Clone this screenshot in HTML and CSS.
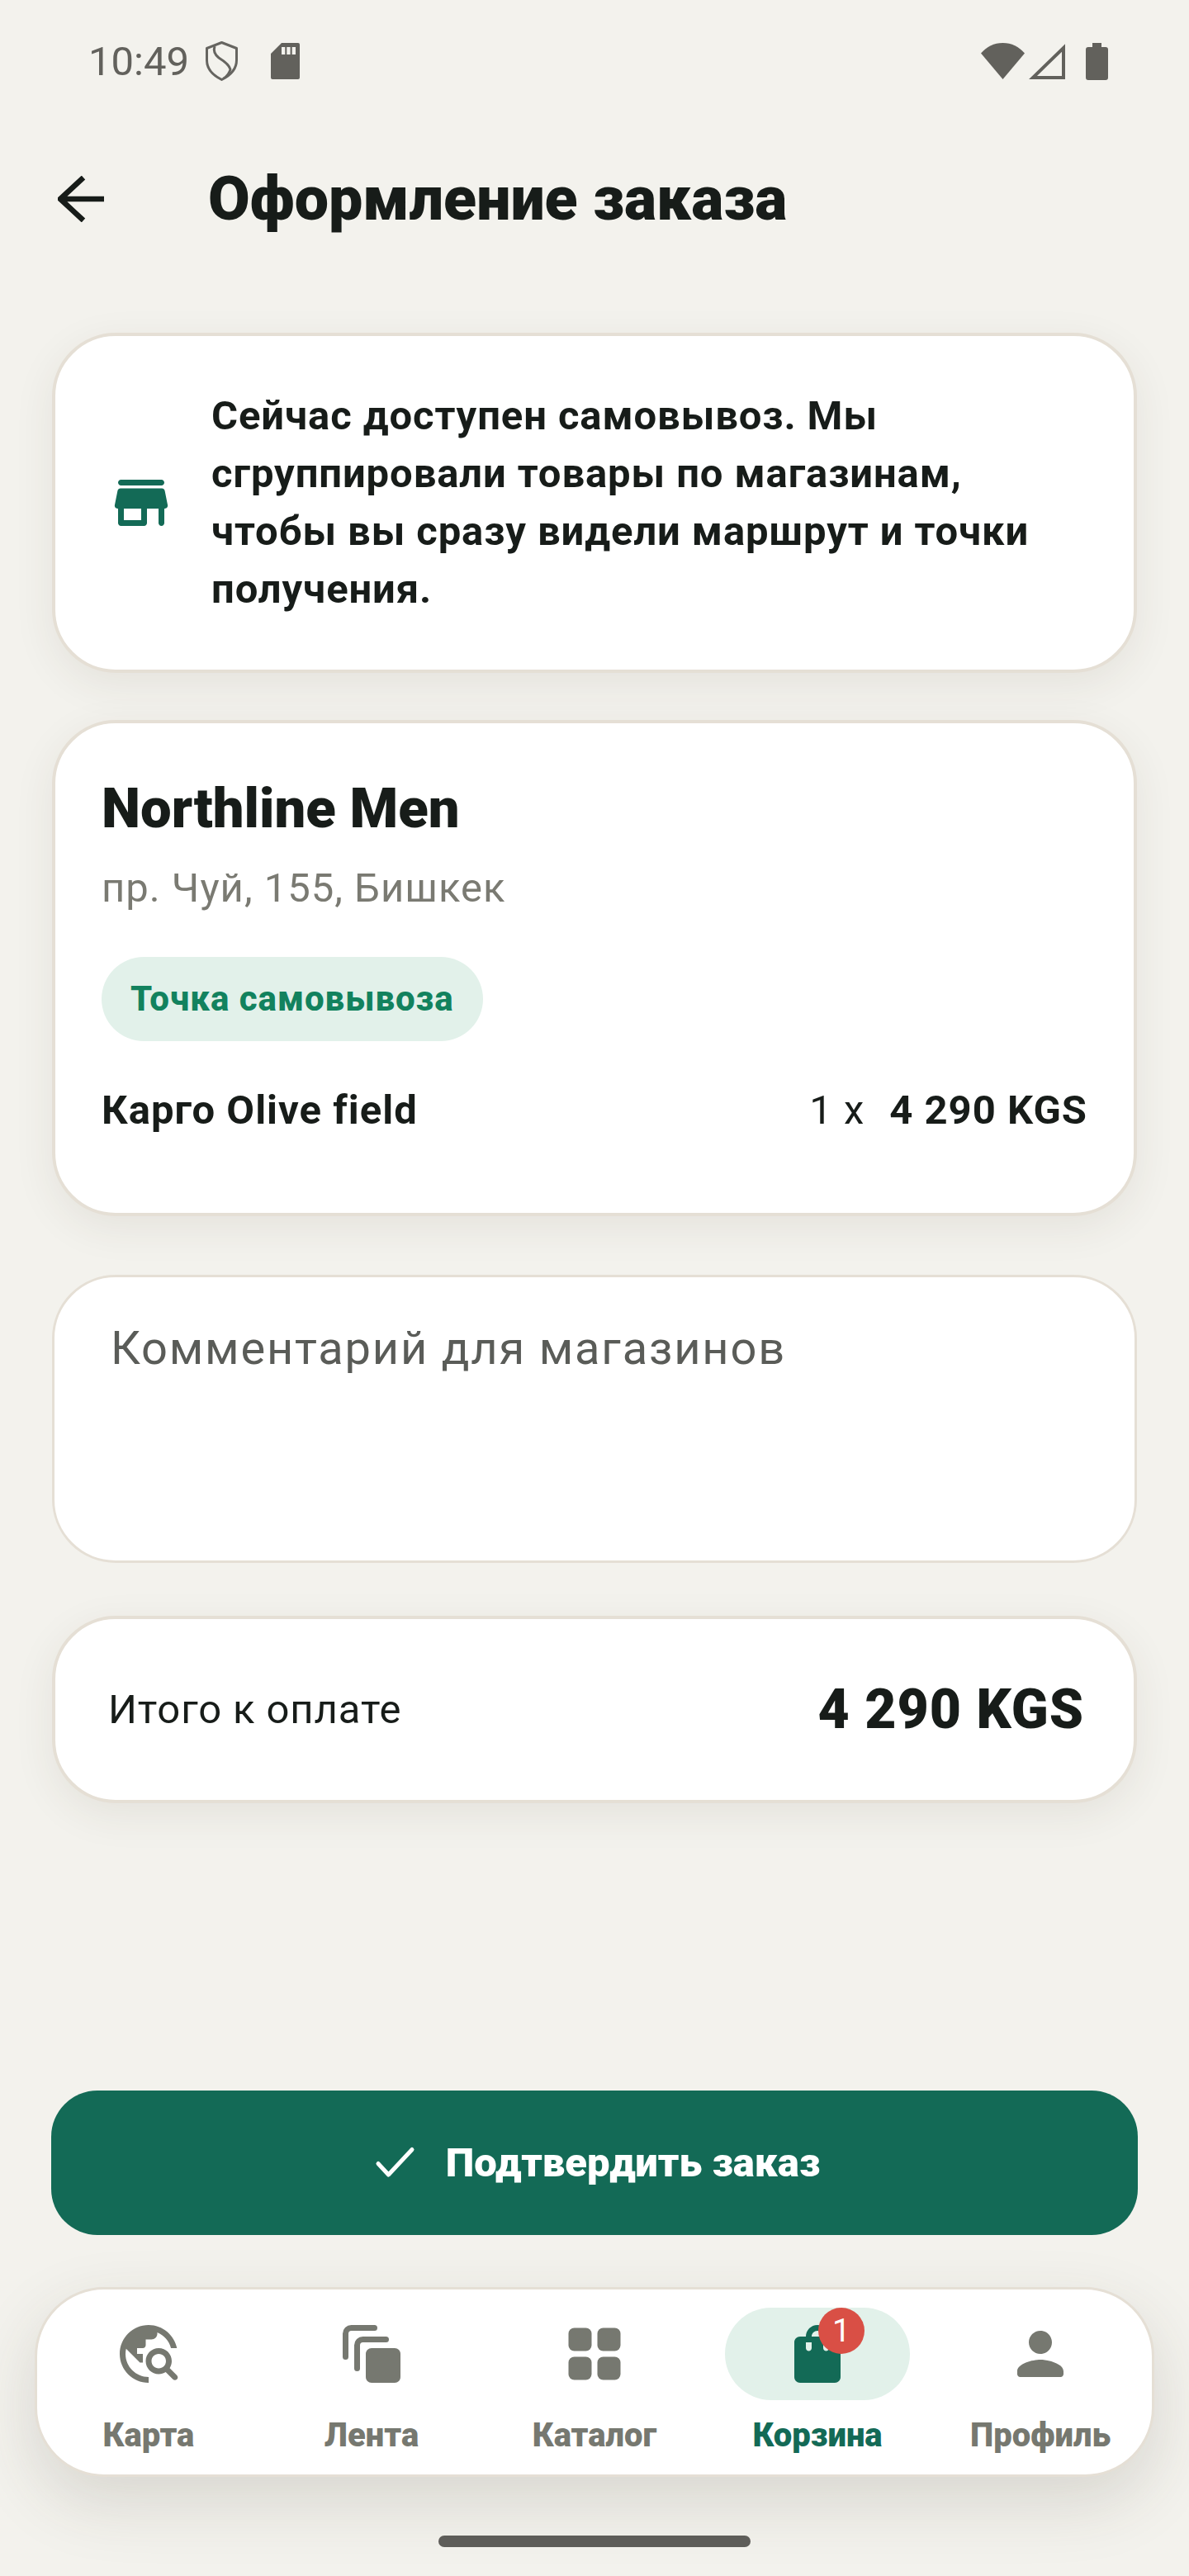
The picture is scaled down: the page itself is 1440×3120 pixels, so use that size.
FILE: index.html
```html
<!DOCTYPE html>
<html lang="ru">

<head>
    <meta charset="UTF-8">
    <meta name="viewport" content="width=device-width, initial-scale=1.0">
    <title>Оформление заказа</title>
    <link rel="stylesheet" href="styles.css">
</head>

<body>
    <div class="screen">
        <!-- Status bar -->
        <div class="statusbar">
            <div class="status-left">
                <span class="time">10:49</span>
                <svg class="ic-shield" viewBox="0 0 39 48"><path d="M19.500 1.500 37.500 8.500V23c0 10-7 18-18 23.500C8.500 41 1.500 33 1.500 23V8.500Z" fill="none" stroke="#666560" stroke-width="3" stroke-linejoin="round"/><path d="M11 6c-2 6 0 10 5 14 8 5 13 10 14 14-1 4-4 8-8 11" fill="none" stroke="#666560" stroke-width="3"/></svg>
                <svg class="ic-sd" viewBox="0 0 35 44"><path d="M13 0h20a2 2 0 0 1 2 2v40a2 2 0 0 1-2 2H2a2 2 0 0 1-2-2V13Z M13 5v9h4.300V5Zm6.300 0v9h4.300V5Zm6.400 0v9h4.300V5Z" fill="#62615c" fill-rule="evenodd"/></svg>
            </div>
            <div class="status-right">
                <svg class="ic-wifi" viewBox="0 0 53 44"><path d="M0 12.500C7 4.500 16 0 26.500 0S46 4.500 53 12.500L26.500 44Z" fill="#62615c"/></svg>
                <svg class="ic-signal" viewBox="0 0 44 43"><path d="M42 5v36H5Z" fill="none" stroke="#62615c" stroke-width="4"/></svg>
                <svg class="ic-battery" viewBox="0 0 27 45"><path d="M8 0h11v5h5a3 3 0 0 1 3 3v34a3 3 0 0 1-3 3H3a3 3 0 0 1-3-3V8a3 3 0 0 1 3-3h5Z" fill="#62615c"/></svg>
            </div>
        </div>

        <!-- Header -->
        <div class="header">
            <svg class="ic-back" viewBox="0 0 56 56"><path d="M56 28H4M31 2 3 28l28 26" fill="none" stroke="#171c19" stroke-width="6.500"/></svg>
            <h1>Оформление заказа</h1>
        </div>

        <!-- Main Content -->
        <div class="content">
            <div class="card notice">
                <svg class="ic-store" viewBox="0 0 24 24"><path d="M5 6h14c.55 0 1-.45 1-1s-.45-1-1-1H5c-.55 0-1 .45-1 1s.45 1 1 1zm15.160 1.800c-.09-.46-.5-.8-.98-.8H4.820c-.48 0-.89.34-.98.8l-1 5c-.12.62.35 1.200.98 1.200H4v5c0 .55.45 1 1 1h8c.55 0 1-.45 1-1v-5h4v5c0 .55.45 1 1 1s1-.45 1-1v-5h.18c.63 0 1.100-.58.98-1.200l-1-5zM12 18H6v-4h6v4z"/></svg>
                <p>Сейчас доступен самовывоз. Мы сгруппировали товары по магазинам, чтобы вы сразу видели маршрут и точки получения.</p>
            </div>

            <div class="card store">
                <h2>Northline Men</h2>
                <div class="address">пр. Чуй, 155, Бишкек</div>
                <span class="chip">Точка самовывоза</span>
                <div class="item">
                    <span class="item-name">Карго Olive field</span>
                    <span class="item-qty">1 x</span>
                    <span class="item-price">4 290 KGS</span>
                </div>
            </div>

            <div class="comment">Комментарий для магазинов</div>

            <div class="card total">
                <span class="total-label">Итого к оплате</span>
                <span class="total-sum">4 290 KGS</span>
            </div>
        </div>

        <button class="confirm" type="button">
            <svg class="ic-check" viewBox="0 0 63 63"><path d="M11 32.500 23.500 46 52 15.500" fill="none" stroke="#fff" stroke-width="5" stroke-linecap="round" stroke-linejoin="round"/></svg>
            Подтвердить заказ
        </button>

        <!-- Bottom nav -->
        <div class="bottomnav">
            <div class="tab">
                <span class="tab-icon"><svg viewBox="0 0 24 24"><path d="M19.300 16.900c.4-.7.7-1.500.7-2.400 0-2.500-2-4.500-4.500-4.500S11 12 11 14.500s2 4.500 4.500 4.500c.9 0 1.700-.3 2.400-.7l2.500 2.500c.39.39 1.010.39 1.400 0 .39-.39.39-1.010 0-1.400l-2.500-2.500zm-3.800.1c-1.400 0-2.500-1.100-2.500-2.500s1.100-2.500 2.500-2.500 2.500 1.100 2.500 2.500-1.100 2.500-2.500 2.500zM12 20v2C6.480 22 2 17.520 2 12S6.480 2 12 2c4.840 0 8.870 3.440 9.800 8h-2.070c-.64-2.460-2.400-4.470-4.730-5.410V5c0 1.100-.9 2-2 2h-2v2c0 .55-.45 1-1 1H8v2h2v3H9l-4.790-4.790C4.080 10.790 4 11.380 4 12c0 4.410 3.590 8 8 8z"/></svg></span>
                <span class="tab-label">Карта</span>
            </div>
            <div class="tab">
                <span class="tab-icon"><svg viewBox="0 0 24 24"><path d="M20 10h-8c-1.100 0-2 .9-2 2v8c0 1.100.9 2 2 2h8c1.100 0 2-.9 2-2v-8c0-1.100-.9-2-2-2z"/><path d="M3 13V5a2 2 0 0 1 2-2h8M7 17V9a2 2 0 0 1 2-2h8" fill="none" stroke="#767870" stroke-width="2" stroke-linecap="round"/></svg></span>
                <span class="tab-label">Лента</span>
            </div>
            <div class="tab">
                <span class="tab-icon"><svg viewBox="0 0 24 24"><rect x="3" y="3" width="8" height="8" rx="2"/><rect x="13" y="3" width="8" height="8" rx="2"/><rect x="3" y="13" width="8" height="8" rx="2"/><rect x="13" y="13" width="8" height="8" rx="2"/></svg></span>
                <span class="tab-label">Каталог</span>
            </div>
            <div class="tab active">
                <span class="tab-icon"><svg viewBox="0 0 24 24"><path d="M18 6h-2c0-2.210-1.790-4-4-4S8 3.790 8 6H6c-1.100 0-2 .9-2 2v12c0 1.100.9 2 2 2h12c1.100 0 2-.9 2-2V8c0-1.100-.9-2-2-2zm-8 4c0 .55-.45 1-1 1s-1-.45-1-1V8h2v2zm2-6c1.100 0 2 .9 2 2h-4c0-1.100.9-2 2-2zm4 6c0 .55-.45 1-1 1s-1-.45-1-1V8h2v2z"/></svg><span class="badge">1</span></span>
                <span class="tab-label">Корзина</span>
            </div>
            <div class="tab">
                <span class="tab-icon"><svg viewBox="0 0 24 24"><path d="M12 12c2.210 0 4-1.790 4-4s-1.790-4-4-4-4 1.790-4 4 1.790 4 4 4zm0 2c-2.670 0-8 1.340-8 4v1c0 .55.45 1 1 1h14c.55 0 1-.45 1-1v-1c0-2.660-5.330-4-8-4z"/></svg></span>
                <span class="tab-label">Профиль</span>
            </div>
        </div>

        <div class="home-indicator"></div>
    </div>
</body>

</html>
```

FILE: styles.css
```css
body {
    font-family: Roboto, "Noto Sans", sans-serif;
    background-color: #f3f2ed;
    color: #171c19;
    margin: 0;
    padding: 0;
}

.screen {
    width: 1440px;
    height: 3120px;
    display: flex;
    flex-direction: column;
    overflow: hidden;
}

/* Status bar */
.statusbar {
    height: 148px;
    display: flex;
    justify-content: space-between;
    align-items: center;
    padding: 0 98px 0 107px;
    color: #62615c;
}

.status-left,
.status-right {
    display: flex;
    align-items: center;
}

.time {
    font-size: 49px;
    font-weight: 400;
    width: 142px;
}

.ic-shield {
    width: 39px;
    height: 48px;
    margin-right: 40px;
}

.ic-sd {
    width: 35px;
    height: 44px;
}

.ic-wifi {
    width: 53px;
    height: 44px;
    margin-right: 5px;
}

.ic-signal {
    width: 44px;
    height: 43px;
    margin-right: 25px;
}

.ic-battery {
    width: 27px;
    height: 45px;
}

/* Header */
.header {
    height: 186px;
    display: flex;
    align-items: center;
    padding-left: 70px;
}

.ic-back {
    width: 56px;
    height: 56px;
    margin-right: 126px;
}

.header h1 {
    margin: 0;
    font-size: 73.500px;
    font-weight: 900;
}

/* Cards */
.content {
    margin: 69px 63px 0;
    display: flex;
    flex-direction: column;
}

.card {
    background: white;
    border: 4px solid #e5dfd5;
    border-radius: 77px;
    box-shadow: 0 14px 50px rgba(60, 55, 40, 0.08);
    box-sizing: border-box;
}

.notice {
    height: 412px;
    display: flex;
    align-items: center;
    padding-left: 62px;
}

.ic-store {
    width: 84px;
    height: 84px;
    flex: none;
    fill: #136a56;
    margin-right: 43px;
}

.notice p {
    margin: 0;
    font-size: 49px;
    font-weight: 700;
    line-height: 70px;
    letter-spacing: 0.900px;
    width: 1020px;
}

.store {
    height: 601px;
    margin-top: 57px;
    padding: 66px 56px 0;
}

.store h2 {
    margin: 0;
    font-size: 67px;
    font-weight: 900;
    line-height: 74px;
}

.address {
    margin-top: 30px;
    font-size: 49px;
    line-height: 60px;
    letter-spacing: 1px;
    color: #7a7a72;
}

.chip {
    display: inline-block;
    margin-top: 53px;
    padding: 0 35px;
    height: 102px;
    line-height: 102px;
    border-radius: 51px;
    background: #e2f1ea;
    color: #12825e;
    font-size: 42px;
    font-weight: 800;
    letter-spacing: 0.950px;
}

.item {
    display: flex;
    align-items: center;
    margin-top: 55px;
    font-size: 49px;
    letter-spacing: 1px;
}

.item-name,
.item-price {
    font-weight: 700;
}

.item-name {
    flex: 1;
}

.item-qty {
    margin-right: 30px;
}

.comment {
    height: 349px;
    margin-top: 71px;
    padding: 50px 68px;
    box-sizing: border-box;
    background: white;
    border: 3px solid #e5dfd5;
    border-radius: 77px;
    font-size: 56px;
    line-height: 72px;
    letter-spacing: 1.800px;
    color: #5a5c58;
}

.total {
    height: 227px;
    margin-top: 64px;
    display: flex;
    justify-content: space-between;
    align-items: center;
    padding: 0 60px 0 64px;
}

.total-label {
    font-size: 49px;
    letter-spacing: 0.900px;
}

.total-sum {
    font-size: 66px;
    font-weight: 900;
    letter-spacing: 1px;
}

/* Confirm button */
.confirm {
    margin: 348px 62px 0;
    height: 175px;
    display: flex;
    justify-content: center;
    align-items: center;
    gap: 30px;
    background: #136a56;
    color: white;
    border: none;
    border-radius: 56px;
    font-family: inherit;
    font-size: 49px;
    font-weight: 900;
    cursor: pointer;
}

.ic-check {
    width: 63px;
    height: 63px;
}

/* Bottom nav */
.bottomnav {
    margin: 63px 42px 0;
    height: 230px;
    display: grid;
    grid-template-columns: repeat(5, 1fr);
    background: white;
    border: 3px solid #e5dfd5;
    border-radius: 84px;
    box-sizing: border-box;
    box-shadow: 0 30px 80px rgba(60, 55, 40, 0.15);
}

.tab {
    display: flex;
    flex-direction: column;
    align-items: center;
    padding-top: 22px;
    color: #767870;
}

.tab-icon {
    position: relative;
    width: 224px;
    height: 112px;
    display: flex;
    justify-content: center;
    align-items: center;
    border-radius: 56px;
    fill: #767870;
}

.tab-icon svg {
    width: 84px;
    height: 84px;
}

.tab-label {
    margin-top: 20px;
    font-size: 40px;
    font-weight: 900;
    line-height: 46px;
}

.active {
    color: #136a56;
}

.active .tab-icon {
    background: #e2f1ea;
    fill: #136a56;
}

.badge {
    position: absolute;
    left: 113px;
    top: 0;
    width: 56px;
    height: 56px;
    border-radius: 50%;
    background: #d94f45;
    color: white;
    font-size: 39px;
    font-weight: 400;
    line-height: 56px;
    text-align: center;
}

.home-indicator {
    width: 378px;
    height: 14px;
    margin: 71px auto 0;
    border-radius: 7px;
    background: #5e5d59;
}
```
